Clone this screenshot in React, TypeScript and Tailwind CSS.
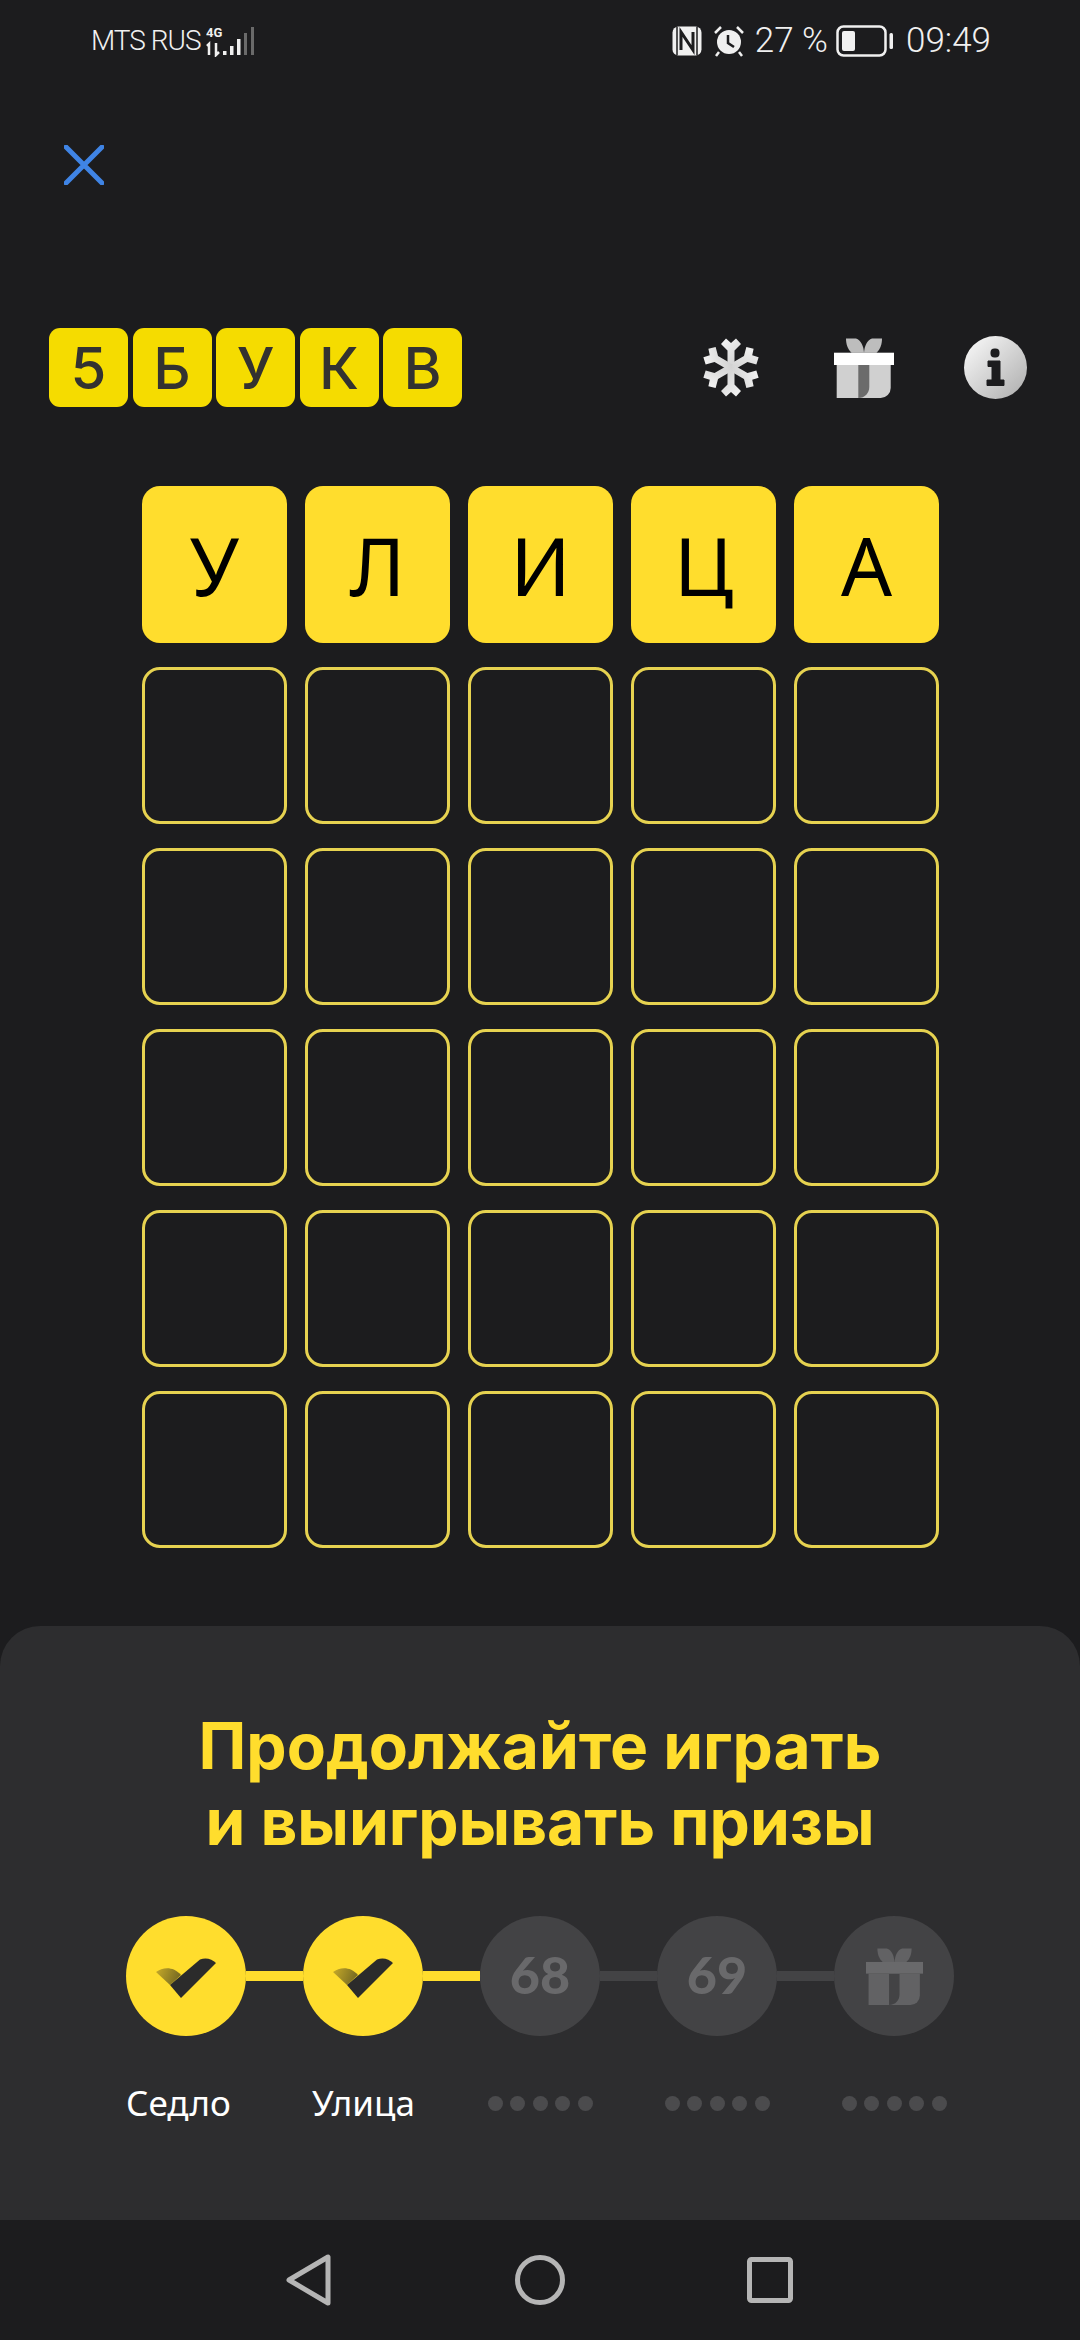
import React from "react";

const sans = "font-['Inter','Noto_Sans',sans-serif]";
const logoLetters = ["5", "Б", "У", "К", "В"];
const firstWord = ["У", "Л", "И", "Ц", "А"];
const emptyRows = [1, 2, 3, 4, 5];

function CloseIcon() {
  return (
    <svg width="40" height="40" viewBox="0 0 40 40" fill="none">
      <path d="M2 2L38 38M38 2L2 38" stroke="#3f84e5" strokeWidth="5" strokeLinecap="round" />
    </svg>
  );
}

function Snowflake() {
  return (
    <svg width="58" height="61" viewBox="0 0 58 61" fill="none">
      <defs>
        <linearGradient id="flake" gradientUnits="userSpaceOnUse" x1="5" y1="5" x2="52" y2="56">
          <stop offset="0" stopColor="#ffffff" />
          <stop offset="1" stopColor="#a8a8a8" />
        </linearGradient>
      </defs>
      <g fill="url(#flake)">
        {[0, 60, 120, 180, 240, 300].map((deg) => (
          <path
            key={deg}
            transform={`rotate(${deg} 29 30.5)`}
            d="M25.5 30.5V13.5L19 7L24 1.5L29 6L34 1.5L39 7L32.5 13.5V30.5Z"
          />
        ))}
      </g>
    </svg>
  );
}

function Gift({ lid, body, ribbon, bow, size }: { lid: string; body: string; ribbon: string; bow: string; size: number }) {
  return (
    <svg width={size} height={size} viewBox="0 0 60 60" fill="none">
      <path d="M12 0.5H22C27 2 29.5 8 30 14.7H17.5C13.5 11 12 6 12 0.5Z" fill={bow} />
      <path d="M48 0.5H38C33 2 30.5 8 30 14.7H42.5C46.5 11 48 6 48 0.5Z" fill={bow} />
      <path d="M2.7 27H56.7V50A10 10 0 0 1 46.7 60H2.7Z" fill={body} />
      <path d="M24.3 27H35.3V49C35.3 55 31 60 24.3 60Z" fill={ribbon} />
      <rect x="0" y="14.7" width="60" height="12.3" fill={lid} />
    </svg>
  );
}

function InfoIcon() {
  return (
    <svg width="63" height="63" viewBox="0 0 63 63" fill="none">
      <defs>
        <linearGradient id="infoFill" x1="0.1" y1="0.1" x2="0.9" y2="0.9">
          <stop offset="0" stopColor="#f4f4f4" />
          <stop offset="1" stopColor="#b4b4b4" />
        </linearGradient>
      </defs>
      <circle cx="31.5" cy="31.5" r="31.5" fill="url(#infoFill)" />
      <rect x="26.5" y="12.5" width="9" height="9" rx="4" fill="#1c1c1e" />
      <path
        d="M24 25H36V44H40V49.5H23V44H28V30.5H24Z"
        fill="#1c1c1e"
        strokeLinejoin="round"
        stroke="#1c1c1e"
        strokeWidth="1"
      />
    </svg>
  );
}

function NfcIcon() {
  return (
    <svg width="30" height="30" viewBox="0 0 30 30" fill="none">
      <rect x="0.5" y="0.5" width="29" height="29" rx="6" fill="#f0f0f0" />
      <path d="M5 1V29M25 1V29" stroke="#1c1c1e" strokeWidth="1.5" />
      <path d="M9 24V6L21 24V6" stroke="#1c1c1e" strokeWidth="3" />
    </svg>
  );
}

function AlarmIcon() {
  return (
    <svg width="32" height="32" viewBox="0 0 32 32" fill="none">
      <circle cx="16" cy="17" r="12" fill="#f0f0f0" />
      <path d="M15 10V18L21 22" stroke="#1c1c1e" strokeWidth="2.5" />
      <path d="M2 8L8 2M30 8L24 2M6 27L3 31M26 27L29 31" stroke="#f0f0f0" strokeWidth="2.5" />
    </svg>
  );
}

function BatteryIcon() {
  return (
    <svg width="57" height="32" viewBox="0 0 57 32" fill="none">
      <rect x="1.5" y="1.5" width="48" height="29" rx="6" stroke="#f0f0f0" strokeWidth="2.5" />
      <rect x="6" y="6" width="13" height="20" rx="2" fill="#f0f0f0" />
      <rect x="53.5" y="8" width="3.5" height="16" rx="1.5" fill="#f0f0f0" />
    </svg>
  );
}

function SignalIcon() {
  return (
    <svg width="50" height="32" viewBox="0 0 50 32" fill="none">
      <text x="0" y="12" fontSize="13" fontWeight="700" fill="#f0f0f0" fontFamily="Roboto, sans-serif">4G</text>
      <path d="M3 30V19L1 21M10 18V30L13 27" stroke="#f0f0f0" strokeWidth="2.5" />
      <rect x="17" y="26" width="3.5" height="4" fill="#f0f0f0" />
      <rect x="24" y="21" width="3.5" height="9" fill="#f0f0f0" />
      <rect x="31" y="14" width="3.5" height="16" fill="#f0f0f0" />
      <rect x="38" y="8" width="3" height="22" fill="#6a6a6a" />
      <rect x="45" y="2" width="3" height="28" fill="#6a6a6a" />
    </svg>
  );
}

function Check({ id }: { id: string }) {
  return (
    <svg width="120" height="120" viewBox="0 0 120 120" fill="none">
      <defs>
        <linearGradient id={id} gradientUnits="userSpaceOnUse" x1="30" y1="55" x2="55" y2="65">
          <stop offset="0" stopColor="#c4a828" />
          <stop offset="1" stopColor="#6e6322" />
        </linearGradient>
      </defs>
      <path d="M30 56C37 51 47 50 55 59L44 69Z" fill={`url(#${id})`} />
      <path d="M44 69L74 43.5C80 41 86 43 90 47L55 82Z" fill="#2b2b2b" />
    </svg>
  );
}

function Connector({ on }: { on: boolean }) {
  return <div className={`h-[10px] w-[57px] ${on ? "bg-[#ffdd2d]" : "bg-[#434345]"}`} />;
}

function Circle({ children, on }: { children: React.ReactNode; on?: boolean }) {
  return (
    <div className={`flex h-[120px] w-[120px] shrink-0 items-center justify-center rounded-full ${on ? "bg-[#ffdd2d]" : "bg-[#434345]"}`}>
      {children}
    </div>
  );
}

function Num({ value }: { value: string }) {
  return <span className="pb-[4px] font-['Lato',sans-serif] text-[52px] font-black leading-none text-[#69696b]">{value}</span>;
}

function Dots() {
  return (
    <div className="flex w-[120px] justify-center gap-[7.5px]">
      {[0, 1, 2, 3, 4].map((i) => (
        <span key={i} className="h-[15px] w-[15px] rounded-full bg-[#4b4b4d]" />
      ))}
    </div>
  );
}

export default function App() {
  return (
    <div className={`flex h-[2340px] w-[1080px] flex-col overflow-hidden bg-[#1c1c1e] ${sans}`}>
      {/* status bar */}
      <div className="flex h-[80px] items-start justify-between pl-[91px] pr-[89px] pt-[25px] font-['Roboto',sans-serif] font-light text-[#f0f0f0]">
        <div className="flex items-center gap-[5px]">
          <span className="text-[28px] leading-[32px] tracking-[-1px]">MTS RUS</span>
          <SignalIcon />
        </div>
        <div className="flex items-center">
          <NfcIcon />
          <span className="ml-[11px]"><AlarmIcon /></span>
          <span className="ml-[10px] text-[35px] leading-[32px]">27 %</span>
          <span className="ml-[8px]"><BatteryIcon /></span>
          <span className="ml-[13px] text-[35px] leading-[32px]">09:49</span>
        </div>
      </div>

      <div className="pl-[64px] pt-[65px]">
        <CloseIcon />
      </div>

      {/* logo and actions */}
      <div className="mt-[143px] flex items-center pl-[49px] pr-[53px]">
        <div className="flex gap-[4.5px]">
          {logoLetters.map((l) => (
            <div key={l} className="flex h-[79px] w-[79px] items-center justify-center rounded-[11px] bg-[#f5dc00] text-[58px] font-medium leading-none text-[#333230]">
              {l}
            </div>
          ))}
        </div>
        <div className="ml-auto flex items-center">
          <Snowflake />
          <span className="ml-[74px]">
            <Gift lid="#ffffff" body="#d0d0d0" ribbon="#6b6b6b" bow="#bdbdbd" size={60} />
          </span>
          <span className="ml-[70px]"><InfoIcon /></span>
        </div>
      </div>

      {/* board */}
      <div className="mt-[79px] flex flex-col gap-[24px] pl-[142px]">
        <div className="flex gap-[18px]">
          {firstWord.map((l) => (
            <div key={l} className="flex h-[157px] w-[145px] items-center justify-center rounded-[18px] bg-[#ffdd2d] font-['Noto_Sans',sans-serif] text-[80px] leading-none text-black">
              {l}
            </div>
          ))}
        </div>
        {emptyRows.map((r) => (
          <div key={r} className="flex gap-[18px]">
            {[0, 1, 2, 3, 4].map((c) => (
              <div key={c} className="h-[157px] w-[145px] rounded-[18px] border-[3px] border-[#e6d250]" />
            ))}
          </div>
        ))}
      </div>

      {/* progress sheet */}
      <div className="mt-[78px] h-[594px] rounded-t-[40px] bg-[#2d2d2f] pt-[82px]">
        <div className="text-center text-[64px] font-bold leading-[76px] text-[#ffdd2d]">
          Продолжайте играть
          <br />
          и выигрывать призы
        </div>
        <div className="mt-[56px] flex items-center pl-[126px]">
          <Circle on><Check id="check1" /></Circle>
          <Connector on />
          <Circle on><Check id="check2" /></Circle>
          <Connector on />
          <Circle><Num value="68" /></Circle>
          <Connector on={false} />
          <Circle><Num value="69" /></Circle>
          <Connector on={false} />
          <Circle>
            <Gift lid="#69696b" body="#626264" ribbon="#434345" bow="#626264" size={57} />
          </Circle>
        </div>
        <div className="mt-[47px] flex h-[40px] items-center pl-[126px]">
          <div className="w-[177px] font-['Noto_Sans',sans-serif] text-[35px] leading-[40px] text-white">Седло</div>
          <div className="flex w-[177px] pl-[9px] font-['Noto_Sans',sans-serif] text-[35px] leading-[40px] text-white">Улица</div>
          <div className="w-[177px]"><Dots /></div>
          <div className="w-[177px]"><Dots /></div>
          <div className="w-[120px]"><Dots /></div>
        </div>
      </div>

      {/* nav bar */}
      <div className="flex h-[120px] items-start bg-[#1c1c1e] pl-[286px] pt-[34px]">
        <svg width="46" height="52" viewBox="0 0 46 52" fill="none">
          <path d="M3 26L42 3V49Z" stroke="#b5b5b5" strokeWidth="5" strokeLinejoin="round" />
        </svg>
        <svg className="ml-[183px]" width="50" height="52" viewBox="0 0 50 52" fill="none">
          <circle cx="25" cy="26" r="22.5" stroke="#b5b5b5" strokeWidth="5" />
        </svg>
        <svg className="ml-[182px] mt-[3px]" width="46" height="46" viewBox="0 0 46 46" fill="none">
          <rect x="2.5" y="2.5" width="41" height="41" rx="2" stroke="#b5b5b5" strokeWidth="5" />
        </svg>
      </div>
    </div>
  );
}
